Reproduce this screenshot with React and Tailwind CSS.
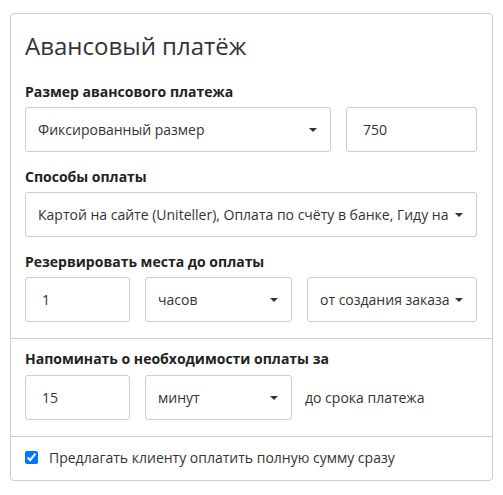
import React from 'react';

const font = { fontFamily: '"Open Sans", "Noto Sans", sans-serif' };

// Dropdown field with the small solid caret on the right
function SelectBox({ value, className = '' }) {
  return (
    <div
      className={`relative flex items-center min-w-0 h-[45px] border border-[#cccccc] rounded-[3px] bg-white pl-[12px] pr-[24px] text-[14px] text-[#333333] ${className}`}
    >
      <span className="block overflow-hidden whitespace-nowrap">{value}</span>
      <span className="absolute right-[13px] top-1/2 -translate-y-1/2 w-0 h-0 border-l-[4px] border-r-[4px] border-t-[4px] border-l-transparent border-r-transparent border-t-[#333333]" />
    </div>
  );
}

function TextBox({ value, className = '' }) {
  return (
    <div
      className={`flex items-center h-[45px] border border-[#cccccc] rounded-[3px] bg-white px-[16px] text-[14px] text-[#333333] ${className}`}
    >
      {value}
    </div>
  );
}

function Label({ children }) {
  return <div className="text-[14px] leading-[20px] font-bold text-[#222222] mb-[5px]">{children}</div>;
}

export default function App() {
  return (
    <div className="w-[503px] h-[495px] bg-white pt-[13px] pl-[10px]" style={font}>
      <div className="w-[483px] border border-[#cccccc] rounded-[4px] bg-white">
        <div className="pl-[14px] pr-[15px] pt-[18px] pb-[16px]">
          <h2 className="text-[24px] leading-[28px] font-normal text-[#333333]">Авансовый платёж</h2>

          <div className="mt-[22px]">
            <Label>Размер авансового платежа</Label>
            <div className="flex gap-[15px]">
              <SelectBox value="Фиксированный размер" className="w-[306px] shrink-0" />
              <TextBox value="750" className="flex-1" />
            </div>
          </div>

          <div className="mt-[15px]">
            <Label>Способы оплаты</Label>
            <SelectBox value="Картой на сайте (Uniteller), Оплата по счёту в банке, Гиду на" />
          </div>

          <div className="mt-[15px]">
            <Label>Резервировать места до оплаты</Label>
            <div className="flex gap-[15px]">
              <TextBox value="1" className="w-[105px] shrink-0" />
              <SelectBox value="часов" className="w-[147px] shrink-0" />
              <SelectBox value="от создания заказа" className="flex-1 !pr-[22px]" />
            </div>
          </div>
        </div>

        <div className="border-t border-[#cccccc] pl-[14px] pr-[15px] pt-[10px] pb-[16px]">
          <div className="text-[14px] leading-[20px] font-bold text-[#222222] mb-[6px]">
            Напоминать о необходимости оплаты за
          </div>
          <div className="flex items-center gap-[15px]">
            <TextBox value="15" className="w-[105px] shrink-0" />
            <SelectBox value="минут" className="w-[147px] shrink-0" />
            <span className="text-[14px] text-[#333333] ml-[-2px]">до срока платежа</span>
          </div>
        </div>

        <div className="border-t border-[#cccccc] h-[44px] pl-[14px] flex items-center">
          <label className="flex items-center gap-[11px] text-[14px] text-[#333333] -mt-[3px]">
            <input type="checkbox" defaultChecked className="w-[13px] h-[13px] m-0 accent-[#0075ff]" />
            Предлагать клиенту оплатить полную сумму сразу
          </label>
        </div>
      </div>
    </div>
  );
}
